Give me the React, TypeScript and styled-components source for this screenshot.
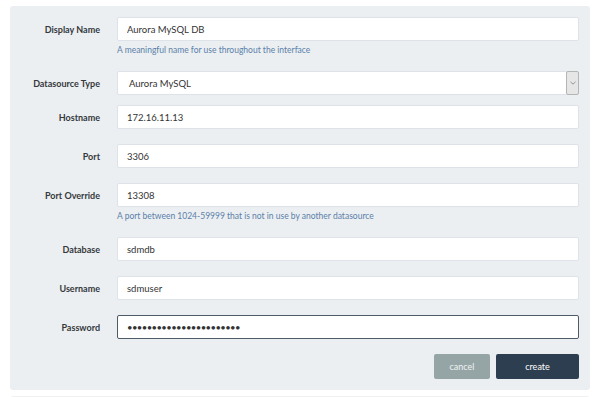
import React from 'react';
import styled, { createGlobalStyle } from 'styled-components';

const GlobalStyle = createGlobalStyle`
  html, body {
    margin: 0;
    padding: 0;
    background: #ffffff;
    font-family: Lato, "Open Sans", sans-serif;
  }
`;

const Page = styled.div`
  box-sizing: border-box;
  height: 100vh;
  overflow: hidden;
  padding: 6px 10px 0 10px;
  display: flex;
  flex-direction: column;
  gap: 6px;
`;

const Panel = styled.form`
  flex-shrink: 0;
  background: #eceff1;
  border-radius: 3px;
  padding: 11px 11px 11px 0;
  display: flex;
  flex-direction: column;
`;

const FormRow = styled.div<{ $spacing: number }>`
  display: grid;
  grid-template-columns: 90px 1fr;
  column-gap: 17px;
  align-items: start;
  margin-bottom: ${({ $spacing }) => $spacing}px;
`;

const NextCard = styled.div`
  flex-shrink: 0;
  height: 20px;
  border: 1px solid #eef0f2;
  border-radius: 3px;
  background: #ffffff;
`;

const Label = styled.label`
  height: 24px;
  display: flex;
  align-items: center;
  justify-content: flex-end;
  font-size: 9px;
  font-weight: 700;
  color: #34383c;
`;

const Field = styled.div`
  display: flex;
  flex-direction: column;
`;

const TextInput = styled.input<{ $focused?: boolean }>`
  box-sizing: border-box;
  height: 24px;
  width: 100%;
  margin: 0;
  padding: 0 9px;
  border: ${({ $focused }) => ($focused ? '1.5px solid #4d5a68' : '1px solid #dde3e8')};
  border-radius: 2px;
  background: #ffffff;
  font-family: Lato, "Open Sans", sans-serif;
  font-size: 9.5px;
  color: #333;
  outline: none;
  caret-color: #222;
  letter-spacing: ${({ type }) => (type === 'password' ? '-0.6px' : '0')};
`;

const Hint = styled.div`
  margin-top: 4px;
  height: 14px;
  font-size: 8.5px;
  color: #5a80aa;
`;

const SelectBox = styled.div`
  box-sizing: border-box;
  height: 24px;
  display: flex;
  align-items: stretch;
  border: 1px solid #dde3e8;
  border-radius: 2px;
  background: #ffffff;
`;

const SelectValue = styled.div`
  flex: 1;
  display: flex;
  align-items: center;
  padding-left: 11px;
  font-size: 9.5px;
  color: #333;
`;

const SelectArrow = styled.div`
  width: 11px;
  display: flex;
  align-items: center;
  justify-content: center;
  background: #e6e6e6;
  border: 1px solid #b5b5b5;
  border-radius: 2px;
  margin: -1px -1px -1px 0;
`;

const Actions = styled.div`
  display: flex;
  justify-content: flex-end;
  gap: 6px;
`;

const Button = styled.button<{ $variant: 'cancel' | 'create' }>`
  height: 25px;
  width: ${({ $variant }) => ($variant === 'create' ? '83px' : '56px')};
  border: none;
  border-radius: 2px;
  background: ${({ $variant }) => ($variant === 'create' ? '#2c3e50' : '#95a5a6')};
  color: ${({ $variant }) => ($variant === 'create' ? '#ffffff' : '#eef2f2')};
  font-family: Lato, "Open Sans", sans-serif;
  font-size: 9px;
  cursor: pointer;
`;

type Row = { label: string; value: string; hint?: string; type?: string; select?: boolean };

const rows: Row[] = [
  { label: 'Display Name', value: 'Aurora MySQL DB', hint: 'A meaningful name for use throughout the interface' },
  { label: 'Datasource Type', value: 'Aurora MySQL', select: true },
  { label: 'Hostname', value: '172.16.11.13' },
  { label: 'Port', value: '3306' },
  { label: 'Port Override', value: '13308', hint: 'A port between 1024-59999 that is not in use by another datasource' },
  { label: 'Database', value: 'sdmdb' },
  { label: 'Username', value: 'sdmuser' },
  { label: 'Password', value: 'sdmpassword12345678901x', type: 'password' },
];

const spacingFor = (row: Row) => (row.hint ? 12 : row.select ? 10 : 15);

const App: React.FC = () => {
  return (
    <>
      <GlobalStyle />
      <Page>
        <Panel onSubmit={(e) => e.preventDefault()}>
          {rows.map((row) => (
            <FormRow key={row.label} $spacing={spacingFor(row)}>
              <Label>{row.label}</Label>
              <Field>
                {row.select ? (
                  <SelectBox>
                    <SelectValue>{row.value}</SelectValue>
                    <SelectArrow>
                      <svg width="6" height="4" viewBox="0 0 6 4">
                        <path d="M0.5 0.8 L3 3.2 L5.5 0.8" fill="none" stroke="#8a8a8a" strokeWidth="0.9" />
                      </svg>
                    </SelectArrow>
                  </SelectBox>
                ) : (
                  <TextInput
                    type={row.type ?? 'text'}
                    defaultValue={row.value}
                    $focused={row.type === 'password'}
                    autoFocus={row.type === 'password'}
                  />
                )}
                {row.hint && <Hint>{row.hint}</Hint>}
              </Field>
            </FormRow>
          ))}
          <Actions>
            <Button type="button" $variant="cancel">cancel</Button>
            <Button type="submit" $variant="create">create</Button>
          </Actions>
        </Panel>
        <NextCard />
      </Page>
    </>
  );
};

export default App;
